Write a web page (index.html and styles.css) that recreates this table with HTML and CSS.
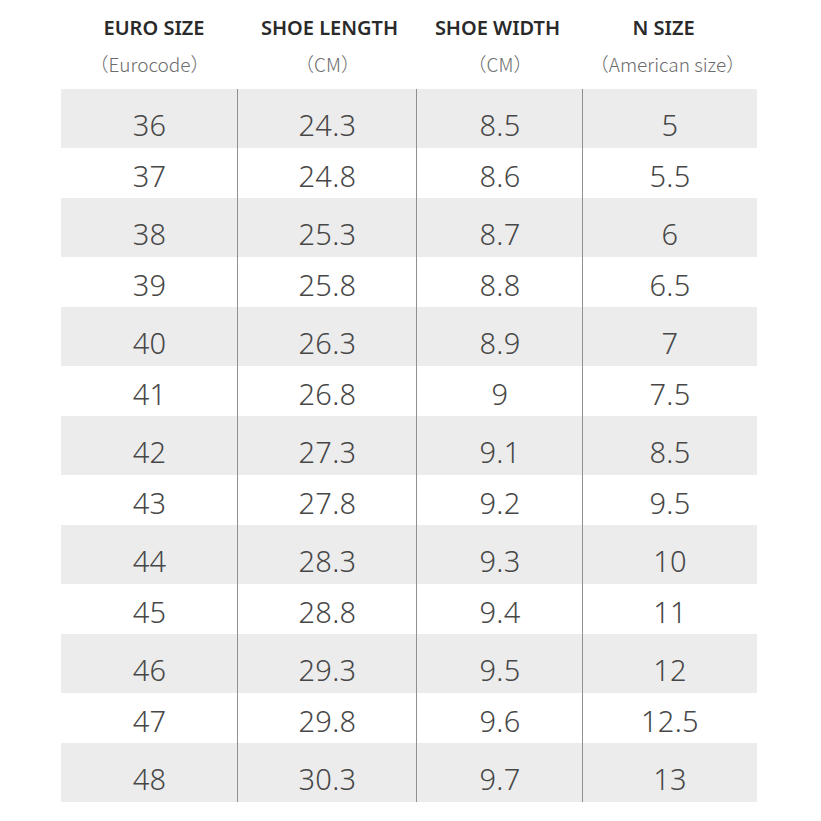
FILE: index.html
```html
<!DOCTYPE html>
<html>
<head>
<meta charset="utf-8">
<link rel="stylesheet" href="styles.css">
</head>
<body>
<div class="chart">
  <div class="head">
    <div class="hcell"><div class="ht">EURO SIZE</div><div class="hs">（Eurocode）</div></div>
    <div class="hcell"><div class="ht">SHOE LENGTH</div><div class="hs">（CM）</div></div>
    <div class="hcell"><div class="ht">SHOE WIDTH</div><div class="hs">（CM）</div></div>
    <div class="hcell"><div class="ht">N SIZE</div><div class="hs">（American size）</div></div>
  </div>
  <div class="table">
    <div class="row shade"><div class="c">36</div><div class="c">24.3</div><div class="c">8.5</div><div class="c">5</div></div>
    <div class="row"><div class="c">37</div><div class="c">24.8</div><div class="c">8.6</div><div class="c">5.5</div></div>
    <div class="row shade"><div class="c">38</div><div class="c">25.3</div><div class="c">8.7</div><div class="c">6</div></div>
    <div class="row"><div class="c">39</div><div class="c">25.8</div><div class="c">8.8</div><div class="c">6.5</div></div>
    <div class="row shade"><div class="c">40</div><div class="c">26.3</div><div class="c">8.9</div><div class="c">7</div></div>
    <div class="row"><div class="c">41</div><div class="c">26.8</div><div class="c">9</div><div class="c">7.5</div></div>
    <div class="row shade"><div class="c">42</div><div class="c">27.3</div><div class="c">9.1</div><div class="c">8.5</div></div>
    <div class="row"><div class="c">43</div><div class="c">27.8</div><div class="c">9.2</div><div class="c">9.5</div></div>
    <div class="row shade"><div class="c">44</div><div class="c">28.3</div><div class="c">9.3</div><div class="c">10</div></div>
    <div class="row"><div class="c">45</div><div class="c">28.8</div><div class="c">9.4</div><div class="c">11</div></div>
    <div class="row shade"><div class="c">46</div><div class="c">29.3</div><div class="c">9.5</div><div class="c">12</div></div>
    <div class="row"><div class="c">47</div><div class="c">29.8</div><div class="c">9.6</div><div class="c">12.5</div></div>
    <div class="row shade"><div class="c">48</div><div class="c">30.3</div><div class="c">9.7</div><div class="c">13</div></div>
  </div>
</div>
</body>
</html>
```
FILE: styles.css
```css
html, body {
  margin: 0;
  padding: 0;
  background: #ffffff;
}
.chart {
  width: 696px;
  margin-left: 61px;
}
.head {
  display: grid;
  grid-template-columns: 177px 179px 166px 174px;
  height: 89px;
  padding-top: 10px;
  box-sizing: border-box;
}
.hcell {
  text-align: center;
}
.ht {
  font-family: "Noto Sans", "Noto Sans CJK SC", sans-serif;
  font-weight: 600;
  font-size: 20px;
  line-height: 36px;
  color: #2a2a2a;
}
.hs {
  font-family: "Noto Sans CJK SC", "Noto Sans", sans-serif;
  font-weight: 300;
  font-size: 19px;
  line-height: 36px;
  color: #6c6c6c;
}
.hcell:first-child .ht { margin-left: 9px; }
.hcell:nth-child(2) .ht { margin-left: 4px; }
.hcell:nth-child(3) .ht { margin-right: 5px; }
.hcell:nth-child(4) .ht { margin-right: 13px; }
.hcell:nth-child(4) .hs { margin-right: 5px; }
.table {
  display: flex;
  flex-direction: column;
}
.row {
  display: grid;
  grid-template-columns: 177px 179px 166px 174px;
  height: 50px;
  padding-top: 5px;
  box-sizing: border-box;
}
.row.shade {
  background: #ececec;
  height: 59px;
  padding-top: 11px;
}
.c {
  font-family: "Noto Sans", "Open Sans", sans-serif;
  font-weight: 300;
  font-size: 29px;
  letter-spacing: 0.3px;
  color: #474747;
  text-align: center;
  display: flex;
  align-items: center;
  justify-content: center;
}
.row .c + .c {
  box-shadow: -1px 0 0 #909090;
  margin-top: -11px;
  padding-top: 11px;
}
.row:not(.shade) .c + .c {
  margin-top: -5px;
  padding-top: 5px;
}
```
